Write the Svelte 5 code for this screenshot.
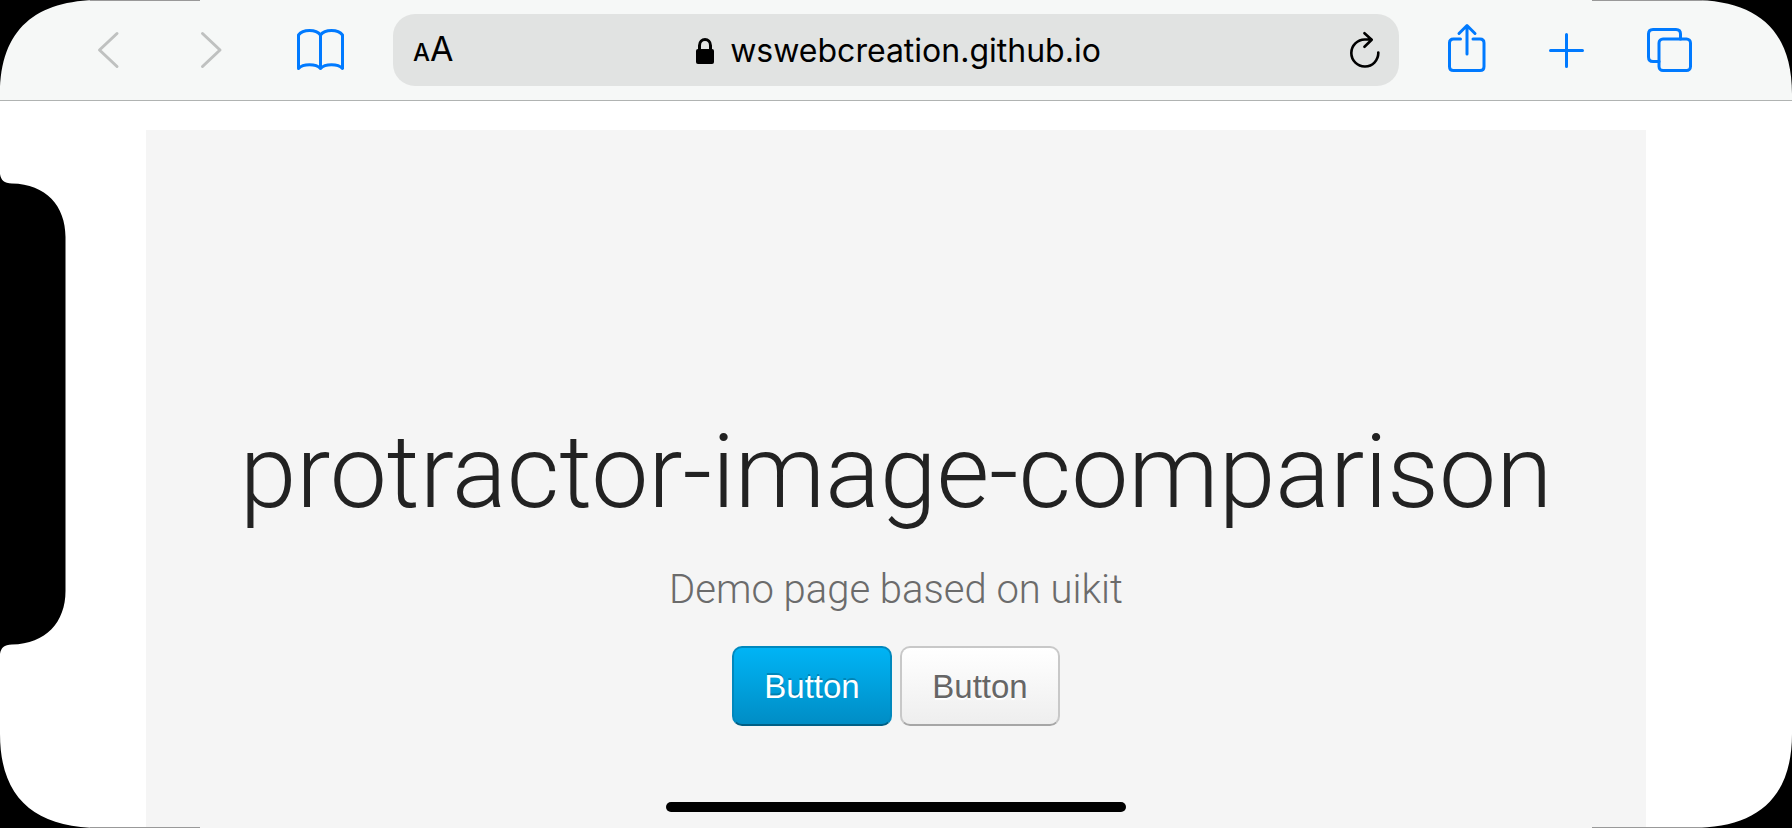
<script>
  const address = 'wswebcreation.github.io';
  const title = 'protractor-image-comparison';
</script>

<div class="screen">
  <header class="toolbar">
    <nav class="group" aria-label="History and bookmarks">
      <button class="tool muted" aria-label="Back" disabled>
        <svg viewBox="0 0 48 56"><path d="M33 11.5 15.5 28 33 44.5" /></svg>
      </button>
      <button class="tool muted" aria-label="Forward" disabled>
        <svg viewBox="0 0 48 56"><path d="M12.5 11.5 30 28 12.5 44.5" /></svg>
      </button>
      <button class="tool" aria-label="Bookmarks">
        <svg viewBox="0 0 48 56"><path d="M24.500 13C20 7 7 7 2.500 13V46.500C7 41.500 20 41.500 24.500 46.500C29 41.500 42 41.500 46.500 46.500V13C42 7 29 7 24.500 13V46.500" /></svg>
      </button>
    </nav>

    <div class="address">
      <button class="reader" aria-label="Page settings"><span class="small">A</span><span class="large">A</span></button>
      <div class="site">
        <svg class="lock" viewBox="0 0 18 26" aria-hidden="true">
          <rect x="0" y="11" width="18" height="15" rx="2" />
          <path d="M3.500 12V7.500C3.500-.5 14.500-.5 14.500 7.500V12" />
        </svg>
        <span>{address}</span>
      </div>
      <button class="reload" aria-label="Reload">
        <svg viewBox="0 0 30 38"><path d="M28.300 21.500A13.500 13.500 0 1 1 15 8.500H21.500M14.500 2.200 21.700 8.700 14.500 15.800" /></svg>
      </button>
    </div>

    <nav class="group" aria-label="Page actions">
      <button class="tool" aria-label="Share">
        <svg viewBox="0 0 48 56"><path d="M17.500 17H10.500Q6.500 17 6.500 21V44.500Q6.500 48.500 10.500 48.500H37Q41 48.500 41 44.500V21Q41 17 37 17H30M24 32V4M16 11.500 24 3.500 32 11.500" /></svg>
      </button>
      <button class="tool" aria-label="New tab">
        <svg viewBox="0 0 48 56"><path d="M22.500 12.500V44.500M6.500 28.500H38.500" /></svg>
      </button>
      <button class="tool" aria-label="Tabs">
        <svg viewBox="0 0 48 56"><path d="M14 39.500H8Q3.500 39.500 3.500 35V12Q3.500 7.500 8 7.500H31Q35.500 7.500 35.500 12V17" /><rect x="14" y="17" width="31.500" height="31.500" rx="4" /></svg>
      </button>
    </nav>
  </header>

  <main class="page">
    <section class="hero">
      <h1>{title}</h1>
      <p>Demo page based on uikit</p>
      <div class="actions">
        <button class="btn primary">Button</button>
        <button class="btn">Button</button>
      </div>
    </section>
  </main>

  <svg class="corner tl" viewBox="0 0 200 100" aria-hidden="true"><path d="M0 0H100C36 0 0 29 0 94Z" /><path class="edge" d="M90 .5H200" /></svg>
  <svg class="corner tr" viewBox="0 0 200 100" aria-hidden="true"><path d="M0 0H100C36 0 0 29 0 94Z" /><path class="edge" d="M90 .5H200" /></svg>
  <svg class="corner bl" viewBox="0 0 200 100" aria-hidden="true"><path d="M0 0H100C36 0 0 29 0 94Z" /><path class="edge" d="M90 .5H200" /></svg>
  <svg class="corner br" viewBox="0 0 200 100" aria-hidden="true"><path d="M0 0H100C36 0 0 29 0 94Z" /><path class="edge" d="M90 .5H200" /></svg>
  <svg class="notch" viewBox="0 0 66 480" aria-hidden="true">
    <path d="M0 0C1 6 4 9.500 12 9.500C46 10 65.500 32 65.500 63V417C65.500 448 46 470 12 470.500C4 470.500 1 474 0 480Z" />
  </svg>
  <div class="home"></div>
</div>

<style>
  :global(body) {
    background: #fff;
  }

  .screen {
    position: relative;
    display: flex;
    flex-direction: column;
    min-height: 100vh;
    overflow: hidden;
    box-sizing: border-box;
    background: #fff;
    font-family: Inter, "Liberation Sans", sans-serif;
    color: #000;
  }

  button {
    margin: 0;
    padding: 0;
    border: 0;
    background: none;
    font: inherit;
    color: inherit;
  }

  svg {
    display: block;
    fill: none;
    stroke: currentColor;
    stroke-linecap: round;
    stroke-linejoin: round;
  }

  .toolbar {
    display: flex;
    align-items: center;
    gap: 49px;
    padding: 14px 99px 14px 84px;
    border-bottom: 1px solid #b0b3b2;
    background: #f6f8f7;
  }

  .group {
    display: flex;
    gap: 58px;
  }

  .group:last-child {
    gap: 53px;
    margin-left: -5px;
  }

  .tool {
    color: #007aff;
  }

  .tool svg {
    width: 48px;
    height: 56px;
    stroke-width: 3;
  }

  .muted {
    color: #bfc1c0;
  }

  .address {
    flex: 1;
    display: grid;
    grid-template-columns: 1fr auto 1fr;
    align-items: center;
    height: 72px;
    padding: 0 19px 0 20px;
    border-radius: 22px;
    background: #e1e3e2;
  }

  .reader {
    justify-self: start;
    padding-top: 4px;
    line-height: 40px;
  }

  .small {
    font-size: 24px;
    font-weight: 500;
  }

  .large {
    font-size: 34px;
  }

  .site {
    display: flex;
    align-items: center;
    gap: 16px;
    padding: 2px 0 0 4px;
    font-size: 32px;
    line-height: 40px;
  }

  .lock {
    width: 18px;
    height: 26px;
    stroke-width: 3;
  }

  .lock rect {
    fill: currentColor;
    stroke: none;
  }

  .reload {
    justify-self: end;
  }

  .reload svg {
    width: 30px;
    height: 38px;
    stroke-width: 2.6;
  }

  .page {
    flex: 1;
    display: flex;
    padding: 29px 146px 0;
  }

  .hero {
    flex: 1;
    padding: 288px 40px 102px;
    background: #f5f5f5;
    text-align: center;
    font-family: Roboto, "Liberation Sans", sans-serif;
  }

  h1 {
    margin: 0;
    color: #222;
    font-size: 102px;
    font-weight: 340;
    line-height: 108px;
    white-space: nowrap;
  }

  p {
    margin: 36px 0 28px;
    color: #6b6b6b;
    font-size: 40px;
    font-weight: 300;
    line-height: 56px;
  }

  .actions {
    display: flex;
    justify-content: center;
    gap: 8px;
  }

  .btn {
    min-width: 160px;
    height: 80px;
    padding: 2px 30px 0;
    border: 2px solid #c8c8c8;
    border-bottom-color: #a6a6a6;
    border-radius: 10px;
    background: linear-gradient(#fff, #eee);
    color: #666;
    font-family: "Liberation Sans", Arial, sans-serif;
    font-size: 33px;
    text-shadow: 0 2px 0 #fff;
  }

  .primary {
    border-color: #0088bd;
    border-bottom-color: #005f85;
    background: linear-gradient(#00b4f5, #008dc5);
    color: #fff;
    text-shadow: 0 -2px 0 rgba(0, 0, 0, 0.2);
  }

  .corner {
    position: absolute;
    width: 200px;
    height: 100px;
    fill: #000;
    stroke: none;
    pointer-events: none;
  }

  .edge {
    stroke: #999;
    stroke-linecap: butt;
  }

  .tl { top: 0; left: 0; }
  .tr { top: 0; right: 0; transform: scaleX(-1); }
  .bl { bottom: 0; left: 0; transform: scaleY(-1); }
  .br { bottom: 0; right: 0; transform: scale(-1); }

  .notch {
    position: absolute;
    top: calc(50% - 240px);
    left: 0;
    width: 66px;
    height: 480px;
    fill: #000;
    stroke: none;
  }

  .home {
    position: absolute;
    bottom: 16px;
    left: 50%;
    width: 460px;
    height: 10px;
    border-radius: 5px;
    background: #000;
    transform: translateX(-50%);
  }
</style>
